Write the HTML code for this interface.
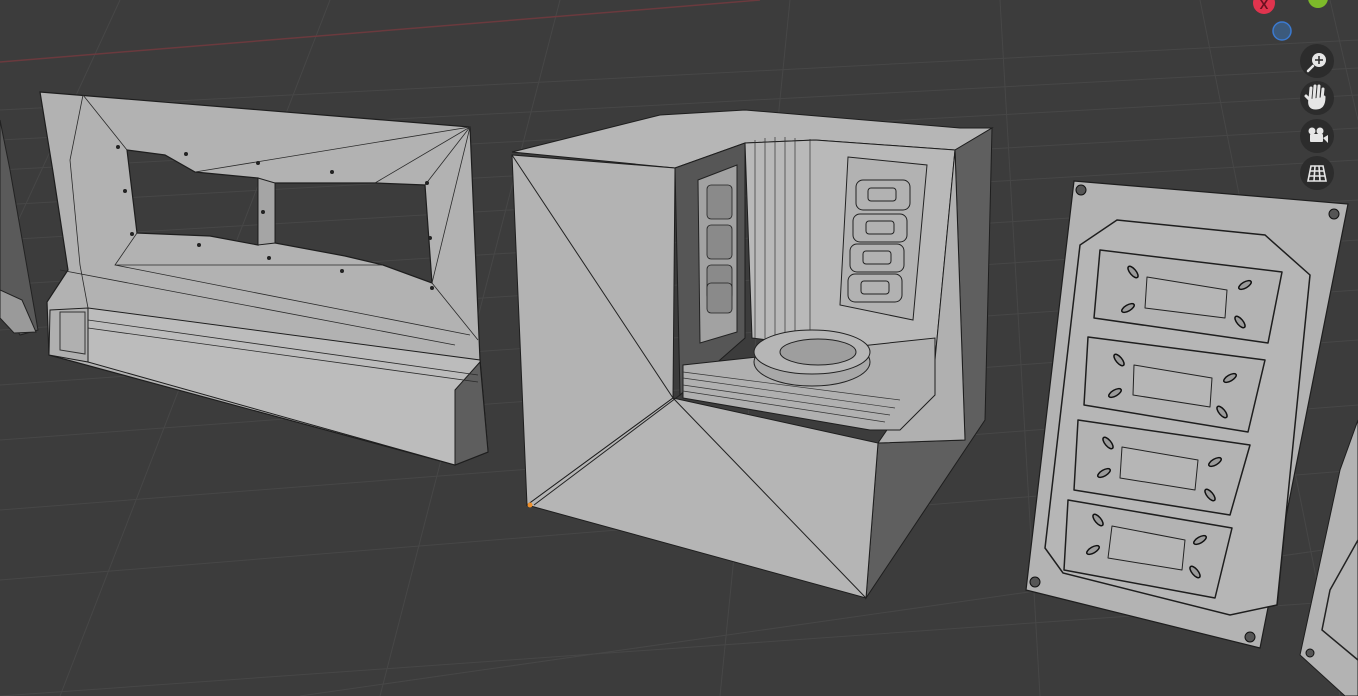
<!DOCTYPE html>
<html><head><meta charset="utf-8"><style>
html,body{margin:0;padding:0;background:#3c3c3c;overflow:hidden}
svg{display:block}
</style></head><body>
<svg width="1358" height="696" viewBox="0 0 1358 696" xmlns="http://www.w3.org/2000/svg">
<rect width="1358" height="696" fill="#3c3c3c"/>
<g stroke="#474747" stroke-width="1" fill="none">
<path d="M0 110 L1358 40 M0 170 L1358 95 M0 240 L1358 160 M0 330 L1358 240 M0 440 L1358 340 M0 580 L1358 470 M0 696 L1358 600"/>
<path d="M0 140 L1358 68 M0 205 L1358 128 M0 285 L1358 200 M0 385 L1358 290 M0 510 L1358 405 M300 696 L1358 545"/>
<path d="M120 0 L0 260 M330 0 L60 696 M560 0 L380 696 M790 0 L720 696 M1000 0 L1040 696 M1200 0 L1340 696 M1330 0 L1358 120"/>
</g>
<path d="M0 62 L760 0" stroke="#6b3a3e" stroke-width="1.5"/>

<polygon points="0,120 10,170 38,330 20,335 0,300" fill="#5a5a5a" stroke="#222" stroke-width="1"/>
<polygon points="0,290 22,300 36,332 14,333 0,318" fill="#9a9a9a" stroke="#222"/>

<path fill-rule="evenodd" fill="#b2b2b2" stroke="#1e1e1e" stroke-width="1.2"
 d="M40,92 L470,127 L480,360 L488,452 L455,465 L49,355 L47,302 L68,270 L53,172 Z
    M127,150 L165,155 L195,172 L258,178 L258,245 L210,236 L137,233 Z
    M275,183 L375,183 L425,185 L432,283 L383,265 L345,256 L275,243 Z"/>
<polygon points="258,178 275,183 275,243 258,245" fill="#a5a5a5" stroke="#1e1e1e"/>
<polygon points="88,308 480,360 488,452 455,465 88,362" fill="#bcbcbc" stroke="#1e1e1e"/>
<polygon points="455,390 480,362 488,452 455,465" fill="#5e5e5e" stroke="#1e1e1e"/>
<polygon points="50,310 88,308 88,362 49,355" fill="#b0b0b0" stroke="#1e1e1e"/>
<polygon points="60,312 85,312 85,354 60,350" fill="none" stroke="#333"/>
<g stroke="#2a2a2a" stroke-width="0.8" fill="none">
<path d="M83,95 L127,150 M83,95 L70,160 L80,265 L88,308 M470,127 L425,185 M470,127 L195,172 M470,127 L375,183 M470,127 L432,283 L478,340 M137,233 L115,265 L470,335 M115,265 L383,265 M88,320 L478,375 M88,328 L478,382 M60,270 L455,345"/>
</g>
<g fill="#222"><circle cx="118" cy="147" r="2"/><circle cx="186" cy="154" r="2"/><circle cx="258" cy="163" r="2"/><circle cx="332" cy="172" r="2"/><circle cx="427" cy="183" r="2"/><circle cx="125" cy="191" r="2"/><circle cx="132" cy="234" r="2"/><circle cx="199" cy="245" r="2"/><circle cx="269" cy="258" r="2"/><circle cx="342" cy="271" r="2"/><circle cx="430" cy="238" r="2"/><circle cx="432" cy="288" r="2"/><circle cx="263" cy="212" r="2"/></g>

<polygon points="512,152 660,115 745,110 960,128 992,128 955,150 815,140 745,143 675,168" fill="#b6b6b6" stroke="#1e1e1e"/>
<polygon points="675,168 745,143 745,338 680,395" fill="#565656" stroke="#1e1e1e"/>
<polygon points="745,143 815,140 955,150 935,360 752,338" fill="#b9b9b9" stroke="#1e1e1e"/>
<g stroke="#333" stroke-width="0.7"><path d="M755,140 L755,338 M765,138 L765,340 M775,137 L775,340 M785,137 L785,342 M795,138 L795,345 M810,139 L810,345"/></g>
<polygon points="955,150 992,128 985,420 866,598 878,443 965,440" fill="#5f5f5f" stroke="#1e1e1e"/>
<polygon points="955,150 965,440 878,443 935,360" fill="#b0b0b0" stroke="#1e1e1e"/>
<polygon points="512,155 675,168 673,398 527,505" fill="#b3b3b3" stroke="#1e1e1e"/>
<path d="M512,155 L673,398" stroke="#222"/>
<polygon points="527,505 673,398 878,443 866,598" fill="#b5b5b5" stroke="#1e1e1e"/>
<path d="M673,398 L866,598 M680,395 L534,505" stroke="#222"/>
<polygon points="683,365 935,338 935,395 900,430 870,430 683,398" fill="#b0b0b0" stroke="#1e1e1e"/>
<g stroke="#333" stroke-width="0.7"><path d="M683,372 L900,400 M683,378 L895,408 M683,385 L890,415 M683,391 L885,422"/></g>
<ellipse cx="812" cy="362" rx="58" ry="24" fill="#a8a8a8" stroke="#222"/>
<ellipse cx="812" cy="352" rx="58" ry="22" fill="#b6b6b6" stroke="#222"/>
<ellipse cx="818" cy="352" rx="38" ry="13" fill="#9e9e9e" stroke="#222"/>
<polygon points="698,180 737,165 737,332 700,343" fill="#a2a2a2" stroke="#222"/>
<g fill="#8a8a8a" stroke="#222" stroke-width="0.8"><rect x="707" y="185" width="25" height="34" rx="4"/><rect x="707" y="225" width="25" height="34" rx="4"/><rect x="707" y="265" width="25" height="34" rx="4"/><rect x="707" y="283" width="25" height="30" rx="4"/></g>
<polygon points="848,157 927,165 913,320 840,305" fill="#b2b2b2" stroke="#222"/>
<g fill="none" stroke="#222" stroke-width="1"><rect x="856" y="180" width="54" height="30" rx="7"/><rect x="853" y="214" width="54" height="28" rx="7"/><rect x="850" y="244" width="54" height="28" rx="7"/><rect x="848" y="274" width="54" height="28" rx="7"/>
<rect x="868" y="188" width="28" height="13" rx="3"/><rect x="866" y="221" width="28" height="13" rx="3"/><rect x="863" y="251" width="28" height="13" rx="3"/><rect x="861" y="281" width="28" height="13" rx="3"/></g>
<circle cx="530" cy="505" r="2.5" fill="#f0902a"/>

<polygon points="1074,181 1348,204 1260,648 1026,590" fill="#b3b3b3" stroke="#1e1e1e" stroke-width="1.2"/>
<polygon points="1117,220 1265,235 1310,275 1277,605 1230,615 1063,573 1045,548 1080,245" fill="#b6b6b6" stroke="#1e1e1e" stroke-width="1.5"/>
<g fill="#b3b3b3" stroke="#1e1e1e" stroke-width="1.5" stroke-linejoin="round">
<polygon points="1100,250 1282,272 1268,343 1094,318"/>
<polygon points="1088,337 1265,360 1248,432 1084,405"/>
<polygon points="1078,420 1250,445 1230,515 1074,490"/>
<polygon points="1068,500 1232,528 1215,598 1064,570"/>
</g>
<g fill="#b6b6b6" stroke="#222" stroke-width="1" stroke-linejoin="round">
<polygon points="1147,277 1227,290 1225,318 1145,308"/>
<polygon points="1134,365 1212,378 1210,407 1133,395"/>
<polygon points="1122,447 1198,460 1195,490 1120,478"/>
<polygon points="1112,526 1185,540 1182,570 1108,558"/>
</g>
<g fill="#9a9a9a" stroke="#111" stroke-width="1.5">
<ellipse cx="1133" cy="272" rx="3" ry="7" transform="rotate(-40 1133 272)"/><ellipse cx="1128" cy="308" rx="3" ry="7" transform="rotate(60 1128 308)"/><ellipse cx="1245" cy="285" rx="3" ry="7" transform="rotate(60 1245 285)"/><ellipse cx="1240" cy="322" rx="3" ry="7" transform="rotate(-40 1240 322)"/>
<ellipse cx="1119" cy="360" rx="3" ry="7" transform="rotate(-40 1119 360)"/><ellipse cx="1115" cy="393" rx="3" ry="7" transform="rotate(60 1115 393)"/><ellipse cx="1230" cy="378" rx="3" ry="7" transform="rotate(60 1230 378)"/><ellipse cx="1222" cy="412" rx="3" ry="7" transform="rotate(-40 1222 412)"/>
<ellipse cx="1108" cy="443" rx="3" ry="7" transform="rotate(-40 1108 443)"/><ellipse cx="1104" cy="473" rx="3" ry="7" transform="rotate(60 1104 473)"/><ellipse cx="1215" cy="462" rx="3" ry="7" transform="rotate(60 1215 462)"/><ellipse cx="1210" cy="495" rx="3" ry="7" transform="rotate(-40 1210 495)"/>
<ellipse cx="1098" cy="520" rx="3" ry="7" transform="rotate(-40 1098 520)"/><ellipse cx="1093" cy="550" rx="3" ry="7" transform="rotate(60 1093 550)"/><ellipse cx="1200" cy="540" rx="3" ry="7" transform="rotate(60 1200 540)"/><ellipse cx="1195" cy="572" rx="3" ry="7" transform="rotate(-40 1195 572)"/>
</g>
<g fill="#555" stroke="#111"><circle cx="1081" cy="190" r="5"/><circle cx="1334" cy="214" r="5"/><circle cx="1035" cy="582" r="5"/><circle cx="1250" cy="637" r="5"/></g>
<polygon points="1358,420 1358,696 1345,696 1300,655 1340,470" fill="#b3b3b3" stroke="#1e1e1e"/>
<path d="M1358,540 L1330,590 L1322,630 L1358,660" fill="none" stroke="#222" stroke-width="1.5"/>
<circle cx="1310" cy="653" r="4" fill="#555" stroke="#111"/>

<circle cx="1264" cy="3" r="11" fill="#e0344e"/>
<text x="1264" y="9" font-family="Liberation Sans, sans-serif" font-size="13" font-weight="bold" fill="#6a1020" text-anchor="middle">X</text>
<circle cx="1318" cy="-2" r="10" fill="#7dba2a"/>
<circle cx="1282" cy="31" r="9" fill="#3c5a7c" stroke="#3b7ad0" stroke-width="1.5"/>
<g fill="#2c2c2c"><circle cx="1317" cy="61" r="17"/><circle cx="1317" cy="98" r="17"/><circle cx="1317" cy="136" r="17"/><circle cx="1317" cy="173" r="17"/></g>
<circle cx="1319" cy="60" r="7" fill="#e6e6e6"/>
<path d="M1313,66 L1308,71" stroke="#e6e6e6" stroke-width="2.5" stroke-linecap="round"/>
<path d="M1319,56 V64 M1315,60 H1323" stroke="#2c2c2c" stroke-width="1.5"/>
<path d="M1310,99 L1311,88 M1314,98 L1315,86 M1318,98 L1319,86 M1322,99 L1323,89 M1310,99 Q1308,108 1316,108 Q1324,108 1324,97 M1310,100 L1306,96" stroke="#e6e6e6" stroke-width="3" stroke-linecap="round" fill="#e6e6e6"/>
<g fill="#e6e6e6"><circle cx="1312" cy="131" r="3.5"/><circle cx="1320" cy="131" r="3.5"/><rect x="1310" y="134" width="13" height="8" rx="1"/><polygon points="1323,138 1328,135 1328,143"/></g>
<g stroke="#e6e6e6" stroke-width="1.6" fill="none"><polygon points="1311,166 1323,166 1326,181 1308,181"/><path d="M1310,171 H1324 M1309,176 H1325 M1315,166 L1314,181 M1319,166 L1320,181"/></g>
</svg>
</body></html>
